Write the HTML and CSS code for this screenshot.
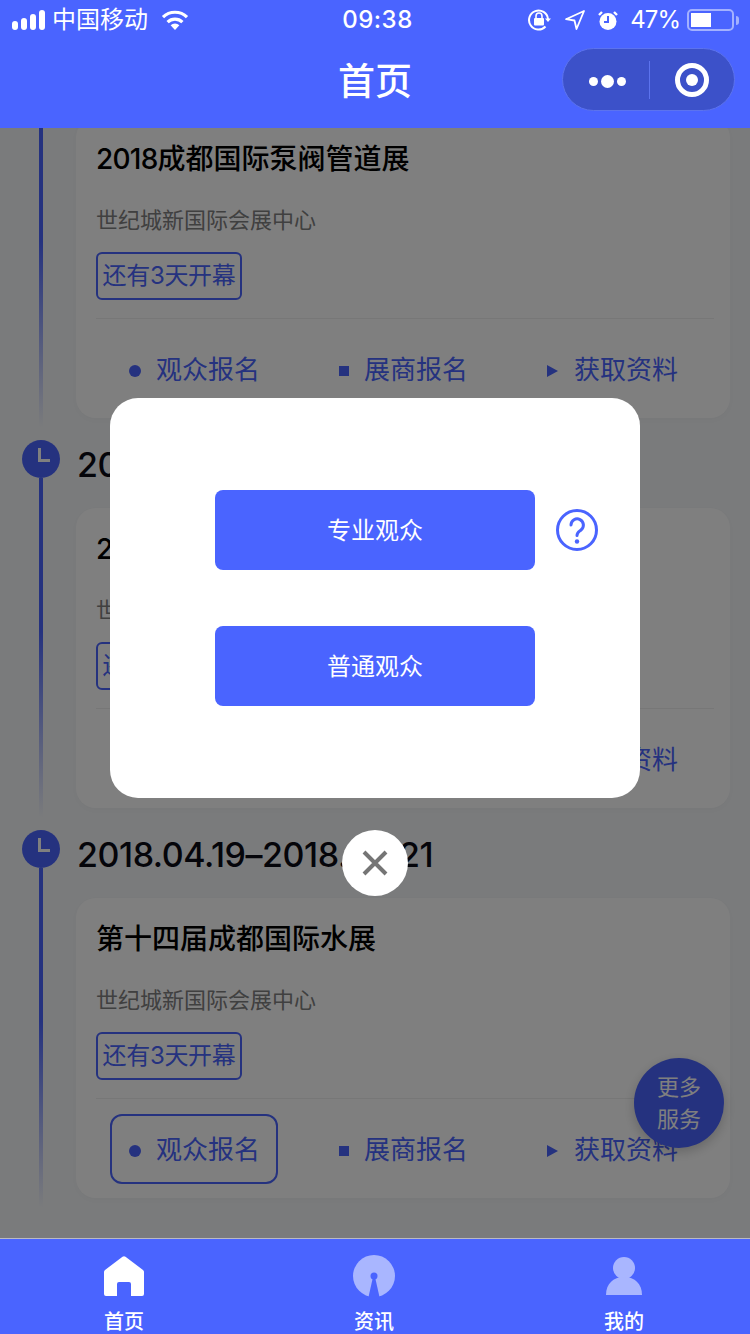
FILE: index.html
```html
<!DOCTYPE html>
<html lang="zh-CN">
<head>
<meta charset="utf-8">
<title>首页</title>
<link rel="stylesheet" href="styles.css">
</head>
<body>
<div class="app">
  <header class="top">
    <div class="status">
      <div class="status-left">
        <svg class="signal" width="34" height="20" viewBox="0 0 34 20"><rect x="0" y="11" width="6" height="9" rx="3" fill="#fff"/><rect x="9" y="8" width="6" height="12" rx="3" fill="#fff"/><rect x="18" y="4" width="6" height="16" rx="3" fill="#fff"/><rect x="27" y="0" width="6" height="20" rx="3" fill="#fff"/></svg>
        <span class="carrier">中国移动</span>
        <svg class="wifi" width="28" height="20" viewBox="0 0 28 20"><path d="M14 20 9.600 15.200a6.400 6.400 0 0 1 8.800 0Z" fill="#fff"/><path d="M6.600 12.200a10.600 10.600 0 0 1 14.800 0" fill="none" stroke="#fff" stroke-width="3.200"/><path d="M2 7.200a17 17 0 0 1 24 0" fill="none" stroke="#fff" stroke-width="3.200"/></svg>
      </div>
      <div class="time">09:38</div>
      <div class="status-right">
        <svg class="lock" width="24" height="24" viewBox="0 0 24 24"><path d="M21 11a9.500 9.500 0 1 0-2.500 7.500" fill="none" stroke="#fff" stroke-width="2"/><path d="M24 10.500h-6l3 3.500Z" fill="#fff"/><rect x="7" y="10" width="10" height="7.500" rx="1" fill="#fff"/><path d="M9 10V8a3 3 0 0 1 6 0v2" fill="none" stroke="#fff" stroke-width="1.600"/></svg>
        <svg class="loc" width="20" height="20" viewBox="0 0 20 20"><path d="M19 1 1 9.200l8.500 1.300L11.500 19Z" fill="none" stroke="#fff" stroke-width="1.800" stroke-linejoin="round"/></svg>
        <svg class="alarm" width="22" height="22" viewBox="0 0 22 22"><circle cx="11" cy="12.500" r="8.500" fill="#fff"/><path d="M11 7v6h-4" fill="none" stroke="#4a64ff" stroke-width="2"/><path d="M2 6 5 3M20 6l-3-3" stroke="#fff" stroke-width="2.400"/></svg>
        <span class="percent">47%</span>
        <div class="battery"><div class="battery-fill"></div></div>
        <div class="battery-cap"></div>
      </div>
    </div>
    <div class="nav">
      <div class="nav-title">首页</div>
      <div class="capsule">
        <div class="capsule-dots"><i class="dot-s"></i><i class="dot-l"></i><i class="dot-s"></i></div>
        <div class="capsule-line"></div>
        <div class="capsule-target"><i></i></div>
      </div>
    </div>
  </header>

  <main class="main">
    <div class="list">
      <section class="group">
        <div class="rail"><div class="clock"><i></i></div><div class="line"></div></div>
        <div class="body">
          <div class="date"></div>
          <article class="card">
            <h2 class="card-title"><span class="num">2018</span>成都国际泵阀管道展</h2>
            <p class="card-place">世纪城新国际会展中心</p>
            <div class="tag">还有3天开幕</div>
            <div class="actions">
              <div class="action"><i class="mark mark-dot"></i><span>观众报名</span></div>
              <div class="action"><i class="mark mark-square"></i><span>展商报名</span></div>
              <div class="action"><i class="mark mark-tri"></i><span>获取资料</span></div>
            </div>
          </article>
        </div>
      </section>
      <section class="group">
        <div class="rail"><div class="clock"><i></i></div><div class="line"></div></div>
        <div class="body">
          <div class="date">2018.04.19–2018.04.21</div>
          <article class="card">
            <h2 class="card-title"><span class="num">2018</span>成都国际泵阀管道展</h2>
            <p class="card-place">世纪城新国际会展中心</p>
            <div class="tag">还有3天开幕</div>
            <div class="actions">
              <div class="action"><i class="mark mark-dot"></i><span>观众报名</span></div>
              <div class="action"><i class="mark mark-square"></i><span>展商报名</span></div>
              <div class="action"><i class="mark mark-tri"></i><span>获取资料</span></div>
            </div>
          </article>
        </div>
      </section>
      <section class="group">
        <div class="rail"><div class="clock"><i></i></div><div class="line"></div></div>
        <div class="body">
          <div class="date">2018.04.19–2018.04.21</div>
          <article class="card">
            <h2 class="card-title">第十四届成都国际水展</h2>
            <p class="card-place">世纪城新国际会展中心</p>
            <div class="tag">还有3天开幕</div>
            <div class="actions">
              <div class="action action-active"><i class="mark mark-dot"></i><span>观众报名</span></div>
              <div class="action"><i class="mark mark-square"></i><span>展商报名</span></div>
              <div class="action"><i class="mark mark-tri"></i><span>获取资料</span></div>
            </div>
          </article>
        </div>
      </section>
    </div>
    <div class="fab">更多<br>服务</div>
    <div class="mask">
      <div class="modal">
        <div class="modal-row">
          <button class="modal-btn">专业观众</button>
          <svg class="help" width="42" height="42" viewBox="0 0 42 42"><circle cx="21" cy="21" r="19.500" fill="none" stroke="#4a64ff" stroke-width="3"/><path d="M15 16a6.200 6.200 0 1 1 10 5c-2.500 2-4 2.500-4 5.500" fill="none" stroke="#4a64ff" stroke-width="3" stroke-linecap="round"/><circle cx="21" cy="32.500" r="2.200" fill="#4a64ff"/></svg>
        </div>
        <div class="modal-row">
          <button class="modal-btn">普通观众</button>
        </div>
      </div>
      <div class="close">
        <svg width="26" height="26" viewBox="0 0 26 26"><path d="M2 2 24 24M24 2 2 24" stroke="#757575" stroke-width="4"/></svg>
      </div>
    </div>
  </main>

  <nav class="tabs">
    <div class="tab">
      <svg width="42" height="42" viewBox="0 0 42 42"><path d="M19.500 1.800a2.500 2.500 0 0 1 3 0L40 15a2.500 2.500 0 0 1 1 2V39a2 2 0 0 1-2 2H28V29a2 2 0 0 0-2-2H16a2 2 0 0 0-2 2V41H3a2 2 0 0 1-2-2V17a2.500 2.500 0 0 1 1-2Z" fill="#fff"/></svg>
      <span>首页</span>
    </div>
    <div class="tab">
      <svg width="42" height="42" viewBox="0 0 42 42"><circle cx="21" cy="21" r="21" fill="#a9b6ff"/><path d="M20 22 15.500 42H26.500L22 22Z" fill="#4a64ff"/><circle cx="21" cy="21" r="3.500" fill="#4a64ff"/></svg>
      <span>资讯</span>
    </div>
    <div class="tab">
      <svg width="42" height="42" viewBox="0 0 42 42"><circle cx="21" cy="13" r="11" fill="#a9b6ff"/><path d="M3 40c0-11 7-18 18-18s18 7 18 18Z" fill="#a9b6ff"/></svg>
      <span>我的</span>
    </div>
  </nav>
</div>
</body>
</html>
```

FILE: styles.css
```css
* { box-sizing: border-box; }
html, body { margin: 0; padding: 0; }
body { font-family: Inter, "Noto Sans CJK SC", sans-serif; color: #000; background: #f5f7f9; }
i { display: block; }

.app { width: 750px; height: 1334px; display: flex; flex-direction: column; overflow: hidden; }

.top { height: 128px; background: #4a64ff; color: #fff; flex: none; }
.status { height: 40px; padding: 0 11px 0 12px; display: grid; grid-template-columns: 1fr auto 1fr; align-items: center; }
.status-left { display: flex; align-items: center; gap: 7px; }
.carrier { font-size: 24px; line-height: 40px; margin-right: 6px; margin-left: -1px; }
.time { font-size: 24px; font-weight: 500; line-height: 40px; letter-spacing: .5px; padding-left: 4px; }
.status-right { display: flex; align-items: center; justify-content: flex-end; gap: 12px; }
.lock { margin-right: 2px; }
.alarm { margin-right: -1px; }
.percent { font-size: 24px; line-height: 40px; letter-spacing: -1px; margin-right: -5px; }
.battery { width: 47px; height: 22px; border: 2px solid #a3b1ff; border-radius: 5px; padding: 2px; margin-right: -10px; }
.battery-fill { width: 20px; height: 14px; background: #fff; }
.battery-cap { width: 3px; height: 9px; background: #a3b1ff; border-radius: 0 3px 3px 0; }

.nav { height: 88px; display: grid; grid-template-columns: 1fr auto 1fr; align-items: start; }
.nav-title { grid-column: 2; margin-top: 15px; font-size: 37px; font-weight: 500; line-height: 54px; }
.capsule { grid-column: 3; justify-self: end; margin: 8px 15px 0 0; width: 173px; height: 63px; border-radius: 32px; background: #3c51c9; border: 1px solid #5c73ee; display: flex; align-items: center; }
.capsule-dots { width: 86px; margin-top: 3px; display: flex; justify-content: center; align-items: center; gap: 3px; padding-left: 3px; }
.dot-s { width: 9px; height: 9px; border-radius: 50%; background: #fff; }
.dot-l { width: 13px; height: 13px; border-radius: 50%; background: #fff; }
.capsule-line { width: 1px; height: 38px; background: #5c73ee; }
.capsule-target { width: 34px; height: 34px; margin-left: 25px; border: 5px solid #fff; border-radius: 50%; display: flex; align-items: center; justify-content: center; }
.capsule-target i { width: 12px; height: 12px; border-radius: 50%; background: #fff; }

.main { flex: 1; position: relative; overflow: hidden; }
.list { margin-top: -100px; }

.group { height: 390px; display: flex; }
.rail { width: 76px; flex: none; display: flex; flex-direction: column; padding: 22px 0 0 22px; }
.clock { width: 38px; height: 38px; flex: none; border-radius: 50%; background: #4a64ff; position: relative; }
.clock i { position: absolute; left: 16px; top: 8px; width: 12px; height: 14px; border-left: 3.5px solid #fff; border-bottom: 3.5px solid #fff; }
.line { width: 4px; margin: 0 0 -10px 17px; flex: 1; background: linear-gradient(#4a64ff 0%, #4a64ff 45%, rgba(74,100,255,.35) 80%, rgba(74,100,255,0) 100%); }
.body { width: 654px; }
.date { height: 90px; padding: 28px 0 0 1px; font-size: 34px; line-height: 38px; color: #0a0a14; font-weight: 500; letter-spacing: -.45px; }
.card { height: 300px; background: #fff; border-radius: 20px; padding: 21px 0 0 20px; box-shadow: 0 2px 10px rgba(0,0,0,.03); }
.card-title { margin: 0; font-size: 28px; line-height: 40px; font-weight: 500; color: #000; }
.num { letter-spacing: -.75px; }
.card-place { margin: 25px 0 0; font-size: 22px; line-height: 32px; color: #808080; }
.tag { margin-top: 16px; width: 146px; height: 48px; border: 2px solid #4a64ff; border-radius: 6px; color: #4a64ff; font-size: 24px; line-height: 44px; letter-spacing: -.3px; text-align: center; white-space: nowrap; }
.actions { margin: 18px 16px 0 0; border-top: 1px solid #efefef; padding: 15px 0 0 14px; display: flex; gap: 41px; }
.action { width: 168px; height: 70px; border: 2px solid transparent; border-radius: 12px; display: flex; align-items: center; padding-left: 17px; color: #4a64ff; font-size: 26px; }
.action span { padding-bottom: 4px; }
.action-active { border-color: #4a64ff; }
.mark { flex: none; margin-top: 4px; }
.mark-dot { width: 12px; height: 12px; margin-right: 15px; border-radius: 50%; background: #4a64ff; }
.mark-square { width: 10px; height: 10px; margin-right: 15px; background: #4a64ff; margin-left: 1px; }
.mark-tri { width: 0; height: 0; margin-right: 16px; border-left: 11px solid #4a64ff; border-top: 6px solid transparent; border-bottom: 6px solid transparent; }

.fab { position: absolute; left: 634px; top: 930px; width: 90px; height: 90px; border-radius: 50%; background: #4a64ff; color: #fff; font-size: 22px; line-height: 32px; text-align: center; padding-top: 13px; box-shadow: 0 4px 12px rgba(0,0,0,.2); }

.mask { position: absolute; inset: 0; background: rgba(0,0,0,.5); padding-top: 270px; display: flex; flex-direction: column; align-items: center; }
.modal { width: 530px; height: 400px; background: #fff; border-radius: 28px; padding-top: 92px; display: flex; flex-direction: column; gap: 56px; align-items: center; }
.modal-row { width: 320px; height: 80px; position: relative; }
.modal-btn { width: 320px; height: 80px; background: #4a64ff; color: #fff; border: 0; border-radius: 8px; font-family: inherit; font-size: 24px; padding: 0 0 4px; }
.help { position: absolute; left: 341px; top: 19px; }
.close { margin-top: 32px; width: 66px; height: 66px; border-radius: 50%; background: #fff; display: flex; align-items: center; justify-content: center; }

.tabs { height: 96px; flex: none; background: #4a64ff; border-top: 1px solid #b9b9c4; display: flex; }
.tab { flex: 1; display: flex; flex-direction: column; align-items: center; color: #fff; font-size: 20px; font-weight: 500; padding: 16px 2px 0 0; }
.tab span { line-height: 24px; margin-top: 13px; white-space: nowrap; }
```
